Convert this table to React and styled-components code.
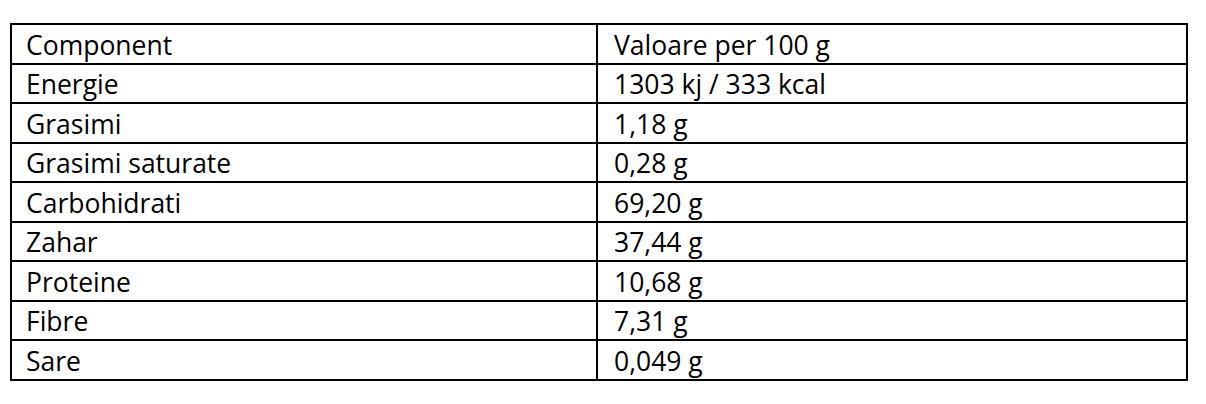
import React from 'react'
import styled, { createGlobalStyle } from 'styled-components'

const rows = [
  ['Component', 'Valoare per 100 g'],
  ['Energie', '1303 kj / 333 kcal'],
  ['Grasimi', '1,18 g'],
  ['Grasimi saturate', '0,28 g'],
  ['Carbohidrati', '69,20 g'],
  ['Zahar', '37,44 g'],
  ['Proteine', '10,68 g'],
  ['Fibre', '7,31 g'],
  ['Sare', '0,049 g'],
]

const GlobalStyle = createGlobalStyle`
  body {
    margin: 0;
    background: #ffffff;
    font-family: "Open Sans", "Noto Sans", sans-serif;
  }
`

const Page = styled.div`
  padding: 23px 18px 0 10px;
`

const Table = styled.table`
  width: 1178px;
  border-collapse: collapse;
  color: #000;
`

const Cell = styled.td`
  box-sizing: border-box;
  border: 2px solid #000;
  height: 39.5px;
  padding: 2px 0 0 ${props => props.$first ? '14px' : '16px'};
  width: ${props => props.$first ? '586px' : 'auto'};
  font-size: 26.5px;
  font-weight: 500;
  line-height: 34px;
  vertical-align: middle;
  white-space: nowrap;
`

function App() {
  return (
    <Page>
      <GlobalStyle />
      <Table>
        <tbody>
          {rows.map(([name, value]) => (
            <tr key={name}>
              <Cell $first>{name}</Cell>
              <Cell>{value}</Cell>
            </tr>
          ))}
        </tbody>
      </Table>
    </Page>
  )
}

export default App
